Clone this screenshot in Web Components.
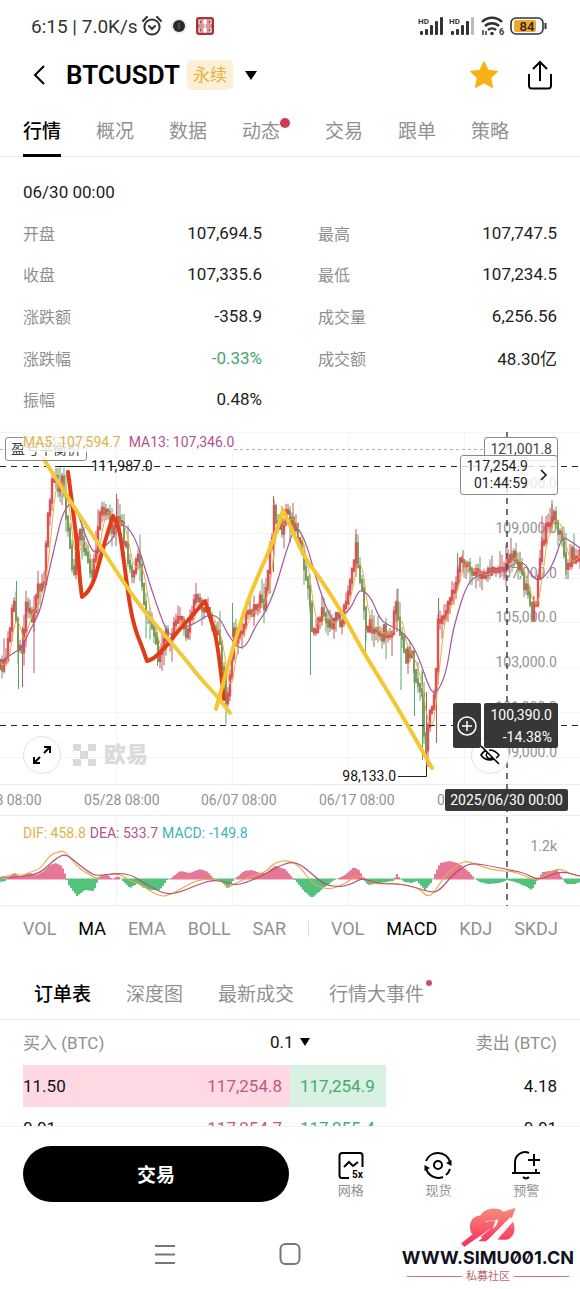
<!DOCTYPE html>
<html lang="zh-CN">
<head>
<meta charset="utf-8">
<meta name="viewport" content="width=device-width, initial-scale=1">
<title>BTCUSDT 永续</title>
<style>
  body {
    margin: 0;
    background: #fff;
    color: #222;
    font-family: Roboto, "Noto Sans CJK SC", sans-serif;
    font-size: 17px;
  }
</style>
</head>
<body>
<market-page></market-page>

<script>
(() => {
  const RESET = `
    *, *::before { box-sizing: border-box; }
    svg { display: block; }
    button, select {
      appearance: none;
      background: none;
      border: 0;
      color: inherit;
      font: inherit;
      margin: 0;
      padding: 0;
    }
  `;

  // Registers an element whose shadow root is cloned from a template
  function define(name, css, html, setup) {
    const template = document.createElement('template');
    template.innerHTML = `<style>${RESET}${css}</style>${html}`;

    customElements.define(name, class extends HTMLElement {
      constructor() {
        super();
        this.attachShadow({ mode: 'open' });
        this.shadowRoot.appendChild(template.content.cloneNode(true));
      }

      connectedCallback() {
        if (setup) setup(this, this.shadowRoot);
      }
    });
  }

  /* ---------- status bar ---------- */

  const signal = last => `
    <svg width="26" height="20" viewBox="0 0 26 20" fill="#333">
      <text x="0" y="8" font-size="8" font-weight="700">HD</text>
      <rect x="2" y="15" width="3" height="4" rx="1"/><rect x="7" y="13" width="3" height="6" rx="1"/>
      <rect x="12" y="9" width="3" height="10" rx="1"/><rect x="17" y="5" width="3" height="14" rx="1"/>
      <rect x="22" y="1" width="3" height="18" rx="1" fill="${last}"/>
    </svg>`;

  define('status-bar', `
    :host {
      align-items: center;
      color: #333;
      display: flex;
      font-size: 19px;
      height: 50px;
      justify-content: space-between;
      padding: 2px 33px 0 31px;
    }
    div { align-items: center; display: flex; gap: 4px; }
    .right { gap: 5px; }
    .dot { margin: 0 5px; }
  `, `
    <div>
      <span>6:15 | 7.0K/s</span>
      <svg width="20" height="20" viewBox="0 0 20 20" fill="none" stroke="#333" stroke-width="2" stroke-linecap="round">
        <circle cx="10" cy="11" r="7.6"/><path d="M1 5l4-4M19 5l-4-4M7 10l3 3 3-3"/>
      </svg>
      <svg class="dot" width="16" height="16" viewBox="0 0 16 16">
        <circle cx="8" cy="8" r="8" fill="#eee"/><circle cx="8" cy="8" r="6" fill="#2b2b2b"/><path d="M8 5v6" stroke="#777"/>
      </svg>
      <svg width="18" height="18" viewBox="0 0 18 18" fill="none" stroke="#fff" stroke-width="1.2">
        <rect width="18" height="18" rx="3" fill="#a93236" stroke="none"/>
        <path d="M3 3h5v4H3zM10 3h5v4h-5zM5 5h8M9 2v14M2.500 9h13M3 15v-4h5v4zM10 15v-4h5v4zM5 13h8"/>
      </svg>
    </div>
    <div class="right">
      ${signal('#333')}${signal('#bbb')}
      <svg width="25" height="22" viewBox="0 -1 25 22" fill="none" stroke="#333" stroke-width="2.500">
        <path d="M2 6a14 14 0 0 1 20 0M5 10a10 10 0 0 1 14 0M8 14a6 6 0 0 1 8 0"/>
        <circle cx="12" cy="17.500" r="1.800" fill="#333" stroke="none"/>
        <path d="M3 19v-5M6 15v4" stroke-width="1.500"/>
        <text x="19" y="19" font-size="9" font-weight="700" fill="#333" stroke="none">6</text>
      </svg>
      <svg width="37" height="18" viewBox="0 0 37 18">
        <rect x="1" y="1" width="32" height="16" rx="5" fill="#fff" stroke="#333" stroke-width="1.600"/>
        <rect x="4" y="3" width="22" height="12" rx="2" fill="#f0a72c"/>
        <path d="M35.500 6v6" stroke="#333" stroke-width="2"/>
        <text x="17" y="14" font-size="13" font-weight="500" text-anchor="middle" fill="#222">84</text>
      </svg>
    </div>
  `);

  /* ---------- pair header ---------- */

  define('pair-header', `
    :host {
      align-items: center;
      color: #000;
      display: flex;
      height: 50px;
      padding: 0 27px 0 32px;
    }
    h1 { font-size: 26px; font-weight: 600; line-height: 32px; margin: 0 7px 0 18px; }
    .pair { align-items: center; display: flex; gap: 12px; }
    .tag {
      background: #fcefd5;
      border-radius: 5px;
      color: #e5b23a;
      font-size: 17px;
      line-height: 28px;
      padding: 1px 6px;
    }
    .share { margin-left: 29px; }
    .star { margin-left: auto; }
  `, `
    <button aria-label="返回">
      <svg width="16" height="20" viewBox="0 0 16 20" fill="none" stroke="#000" stroke-width="2"><path d="M12 1L3 10l9 9"/></svg>
    </button>
    <h1><slot></slot></h1>
    <button class="pair" aria-label="切换合约">
      <span class="tag">永续</span>
      <svg width="12" height="9" viewBox="0 0 12 9"><path d="M0 0h12L6 9z"/></svg>
    </button>
    <button class="star" aria-label="收藏">
      <svg width="28" height="28" viewBox="0 0 28 28" fill="#fbb016" stroke="#fbb016" stroke-width="1.500" stroke-linejoin="round">
        <path d="M14 1l4 8.500 9.200 1-6.800 6.300 1.900 9.400L14 21.600l-8.300 4.600 1.900-9.400L.8 10.500l9.200-1z"/>
      </svg>
    </button>
    <button class="share" aria-label="分享">
      <svg width="26" height="30" viewBox="0 0 26 30" fill="none" stroke="#000" stroke-width="2">
        <path d="M2 14v12a2.500 2.500 0 0 0 2.500 2.500h17A2.500 2.500 0 0 0 24 26V14M13 21V2M6 9l7-7 7 7"/>
      </svg>
    </button>
  `);

  /* ---------- tabs ---------- */

  define('tab-strip', `
    :host {
      border-bottom: 1px solid #ececec;
      display: flex;
      gap: 35px;
      padding: 14px 23px 0;
      white-space: nowrap;
    }
    :host([inset]) { padding: 26px 34px 0; }
  `, '<slot></slot>');

  define('tab-item', `
    :host { color: #919191; display: block; font-size: 19px; line-height: 36px; }
    :host([active]) { color: #000; font-weight: 500; }
    button { display: block; padding-bottom: 6px; position: relative; }
    :host([underline]) button { box-shadow: 0 1px #000, inset 0 -2px #000; }
    :host([badge="large"]) { margin-right: 10px; }
    :host([badge]) button::before {
      background: #cd3c52;
      border-radius: 50%;
      content: "";
      height: 10px;
      position: absolute;
      right: -10px;
      top: 4px;
      width: 10px;
    }
    :host([badge="small"]) button::before {
      background: #c4506e;
      height: 6px;
      right: -8px;
      top: 3px;
      width: 6px;
    }
  `, '<button><slot></slot></button>');

  /* ---------- candle summary ---------- */

  define('stat-item', `
    :host { align-items: center; display: flex; justify-content: space-between; }
    .label { color: #8f8f8f; font-size: 16px; }
    :host([down]) .value { color: #3fa66b; }
  `, '<span class="label"></span><span class="value"><slot></slot></span>', (host, root) => {
    root.querySelector('.label').textContent = host.getAttribute('label');
  });

  define('quote-panel', `
    :host { display: block; padding: 23px 23px 12px; }
    time { display: block; line-height: 24px; margin-bottom: 8px; }
    .grid {
      column-gap: 56px;
      display: grid;
      grid-template-columns: 1fr 1fr;
      grid-template-rows: repeat(5, 1fr);
      min-height: 208px;
    }
  `, `
    <time>06/30 00:00</time>
    <div class="grid">
      <stat-item label="开盘">107,694.5</stat-item>
      <stat-item label="最高">107,747.5</stat-item>
      <stat-item label="收盘">107,335.6</stat-item>
      <stat-item label="最低">107,234.5</stat-item>
      <stat-item label="涨跌额">-358.9</stat-item>
      <stat-item label="成交量">6,256.56</stat-item>
      <stat-item label="涨跌幅" down>-0.33%</stat-item>
      <stat-item label="成交额">48.30亿</stat-item>
      <stat-item label="振幅">0.48%</stat-item>
    </div>
  `);

  /* ---------- chart ---------- */

  // All series are [x, y, x, y, ...] in the chart's own units (580 wide)
  const PRICE = [0,236, 5,228, 8,213, 11,188, 14,174, 17,205, 19,225, 22,215, 26,178, 30,176, 33,190, 36,158,
    42,160, 44,150, 46,108, 49,80, 51,55, 55,40, 58,58, 62,46, 65,78, 70,120, 74,140, 77,105, 81,105, 85,124,
    89,136, 93,142, 97,105, 101,82, 106,79, 110,88, 114,100, 117,78, 121,92, 124,108, 128,128, 133,140, 136,125,
    139,118, 142,152, 146,180, 150,190, 154,205, 158,222, 162,214, 165,200, 170,210, 175,194, 180,182, 186,200,
    190,190, 197,160, 200,170, 206,180, 211,190, 216,196, 220,212, 223,240, 226,268, 229,254, 231,238, 234,200,
    238,208, 243,190, 248,183, 254,175, 260,168, 264,172, 268,134, 272,108, 274,82, 278,90, 282,94, 285,80,
    290,92, 295,92, 300,112, 305,140, 308,158, 311,190, 313,206, 317,192, 321,180, 326,188, 331,196, 336,184,
    342,188, 347,172, 350,152, 353,132, 356,118, 360,142, 363,168, 366,198, 370,192, 375,194, 380,204, 384,200,
    390,204, 396,178, 401,208, 406,224, 410,218, 415,240, 419,248, 422,266, 425,320, 427,304, 430,280, 434,266,
    436,238, 438,192, 441,194, 445,184, 449,174, 453,158, 457,142, 461,128, 465,130, 470,140, 476,140, 482,144,
    488,140, 496,138, 503,138, 508,134, 511,118, 515,128, 520,138, 525,152, 529,168, 533,184, 537,160, 541,112,
    545,100, 549,98, 554,84, 558,96, 563,115, 567,134, 572,124, 580,121];

  const MA13 = [0,230, 15,220, 22,216, 30,198, 40,180, 47,148, 55,113, 62,83, 70,70, 77,78, 85,103, 94,123,
    104,115, 112,108, 120,92, 128,95, 137,110, 147,143, 155,168, 165,196, 172,205, 180,196, 190,194, 200,188,
    210,182, 220,186, 228,203, 238,216, 246,215, 256,193, 265,181, 275,158, 285,123, 296,91, 307,113, 315,143,
    325,173, 333,190, 342,183, 350,178, 358,160, 362,158, 371,165, 380,188, 390,194, 398,197, 408,206, 418,223,
    428,253, 435,264, 446,243, 452,203, 458,180, 465,158, 473,145, 490,140, 505,138, 515,131, 525,131, 530,141,
    537,149, 545,145, 555,128, 562,104, 572,110, 580,116];

  const MACD = [0,-3, 5,-2, 6,0, 14,6, 20,2, 24,4, 30,6, 36,4, 44,8, 50,14, 56,16, 62,13, 66,3, 68,-5, 77,-17,
    85,-11, 94,-12, 98,-1, 100,4, 108,4, 112,0, 118,3, 121,0, 130,-9, 138,-4, 142,-8, 150,-11, 160,-11, 167,-1,
    170,0, 180,8, 190,6, 200,10, 208,7, 214,0, 222,-3, 228,-10, 233,-2, 236,1, 244,8, 252,9, 260,6, 266,6,
    275,13, 285,10, 293,1, 296,-2, 304,-12, 312,-19, 320,-12, 334,-1, 337,0, 345,4, 354,12, 360,8, 364,-1,
    368,-6, 380,-4, 393,-2, 397,5, 400,0, 405,-3, 412,-4, 417,-2, 425,-11, 432,-3, 435,5, 440,16, 450,18,
    460,15, 470,6, 475,0, 480,-3, 488,-5, 500,-4, 507,-1, 515,-3, 525,-7, 532,-11, 538,0, 543,7, 550,8, 557,9,
    562,1, 566,-5, 575,-5, 580,-3];

  const DIF = [0,445, 10,444, 15,441, 22,444, 30,440, 40,437, 50,423, 60,419, 66,420, 77,435, 90,443, 97,447,
    105,442, 120,442, 130,449, 140,452, 150,459, 162,465, 172,462, 184,455, 197,448, 212,447, 222,449, 228,456,
    240,449, 252,444, 266,440, 275,430, 290,428, 300,435, 312,451, 322,456, 332,457, 345,452, 355,444, 362,444,
    370,451, 380,452, 395,451, 405,453, 420,457, 427,465, 434,461, 445,443, 460,431, 468,429, 480,434, 497,439,
    512,439, 525,444, 537,449, 548,441, 560,436, 570,442, 580,444];

  const DEA = [0,446, 22,445, 40,441, 50,432, 58,425, 66,422, 77,431, 90,441, 97,444, 118,441, 132,443, 142,450,
    155,457, 165,462, 178,461, 197,453, 212,448, 225,450, 235,453, 245,451, 262,444, 277,435, 290,430, 300,432,
    312,442, 325,453, 340,455, 352,452, 362,446, 372,450, 385,452, 400,452, 415,455, 432,461, 440,458, 450,446,
    462,435, 473,431, 490,434, 510,438, 525,441, 535,447, 545,446, 560,439, 580,444];

  // Hand-drawn trend strokes
  const STROKES = [
    ['#e23b17', [68,40, 77,108, 80,150, 82,165, 82,165, 88,160, 95,147, 104,112, 113,84, 113,84, 119,95, 123,122, 130,176, 136,200, 141,212, 147,229, 147,229, 153,227, 165,216, 178,199, 190,186, 205,169, 205,169, 211,188, 217,208, 224,267]],
    ['#f3c93c', [43,26, 70,69, 100,114, 126,154, 146,182, 170,209, 190,233, 200,246, 217,264, 230,281]],
    ['#f6c52f', [216,277, 230,226, 245,176, 259,141, 274,108, 283,78, 283,78, 289,91, 304,125, 322,149, 343,182, 362,218, 390,263, 411,299, 432,336]]
  ];

  // Wicks that reach well past their neighbours: x, top, bottom, rising
  const WICKS = [[16.5, 149, 186, 0], [18.5, 200, 257, 0], [22.5, 195, 255, 1], [60, 34, 70, 0], [34, 192, 241, 1],
    [226, 250, 292, 0], [232.5, 171, 205, 0], [273.5, 64, 140, 1], [293, 71, 100, 1], [310.500, 150, 243, 0],
    [365.500, 185, 223, 0], [397, 157, 200, 1], [356, 102, 145, 1], [401, 205, 258, 0], [414.500, 230, 284, 0],
    [422.500, 240, 328, 0], [426.500, 260, 340, 1], [436.500, 250, 311, 1], [438.500, 166, 245, 1],
    [457.500, 121, 150, 0], [463, 118, 140, 1], [511, 106, 130, 1], [552, 68, 100, 0], [542, 84, 112, 1],
    [566, 120, 147, 0], [533.500, 165, 188, 1], [124.500, 120, 150, 0], [157.500, 200, 234, 0], [116.500, 62, 95, 1]];

  function valueAt(series, x) {
    let i = 2;
    while (i < series.length - 2 && series[i] < x) i += 2;
    const t = (x - series[i - 2]) / (series[i] - series[i - 2]);
    return series[i - 1] + (series[i + 1] - series[i - 1]) * t;
  }

  // A repeated point keeps its corner sharp
  function smooth(p) {
    let d = `M${p[0]} ${p[1]}`;
    for (let i = 2; i < p.length - 2; i += 2) {
      d += `Q${p[i]} ${p[i + 1]} ${(p[i] + p[i + 2]) / 2} ${(p[i + 1] + p[i + 3]) / 2}`;
    }
    return `${d}L${p[p.length - 2]} ${p[p.length - 1]}`;
  }

  // Small repeatable generator, so that the candles are the same on every load
  function seeded(seed) {
    return () => {
      seed = (seed * 16807) % 2147483647;
      return seed / 2147483647;
    };
  }

  function drawCandles() {
    const rand = seeded(77);
    const step = 2;
    const paths = { up: '', down: '', upWick: '', downWick: '' };
    const closes = [];
    let open = valueAt(PRICE, 0);

    for (let x = 0; x <= 580; x += step) {
      const calm = x > 468 && x < 508 ? 6 : 14;
      const close = valueAt(PRICE, x) + (rand() - 0.5) * calm;
      const key = close <= open + 3 ? 'up' : 'down';
      const top = Math.min(open, close) - 2;
      const bottom = Math.max(open, close) + 2;
      const high = Math.max(36, top - rand() * rand() * 22);
      const low = bottom + rand() * rand() * 22;

      paths[key] += `M${x} ${top.toFixed(1)}V${bottom.toFixed(1)}`;
      paths[`${key}Wick`] += `M${x} ${high.toFixed(1)}V${low.toFixed(1)}`;
      closes.push(close);
      open = close;
    }

    WICKS.forEach(([x, top, bottom, up]) => {
      paths[up ? 'upWick' : 'downWick'] += `M${x} ${top}V${bottom}`;
    });

    const ma5 = closes.map((c, i) => {
      const part = closes.slice(Math.max(0, i - 4), i + 1);
      return `${i ? 'L' : 'M'}${i * step} ${(part.reduce((a, b) => a + b) / part.length).toFixed(1)}`;
    }).join('');

    return `
      <path d="${paths.downWick}" stroke="#56a869"/>
      <path d="${paths.upWick}" stroke="#bb5a60"/>
      <path d="${paths.down}" stroke="#7f9a5e" stroke-width="2"/>
      <path d="${paths.up}" stroke="#db5257" stroke-width="2.400"/>
      <path d="${ma5}" stroke="#ecae43"/>
      <path d="${smooth(MA13)}" stroke="#aa5797" stroke-width="1.200"/>`;
  }

  function drawMacd() {
    let up = '';
    let down = '';
    for (let x = 1; x < 580; x += 2) {
      const v = valueAt(MACD, x);
      if (v > 0) up += `M${x} 447.500V${(447 - v).toFixed(1)}`;
      else down += `M${x} 446.500V${(447 - v).toFixed(1)}`;
    }
    return `
      <path d="${up}" stroke="#e0557c" stroke-width="1.600"/>
      <path d="${down}" stroke="#33b865" stroke-width="1.700"/>
      <path d="${smooth(DIF)}" stroke="#e9a94b" stroke-width="1.200"/>
      <path d="${smooth(DEA)}" stroke="#b64f72" stroke-width="1.200"/>`;
  }

  function drawAxis() {
    const prices = ['111,000.0', '109,000.0', '107,000.0', '105,000.0', '103,000.0', '101,000.0', '99,000.0'];
    const rows = prices.map((p, i) => `<text x="557" y="${56 + Math.round(i * 44.800)}" text-anchor="end">${p}</text>`);
    const days = [['05/18', -34], ['05/28', 84], ['06/07', 201], ['06/17', 319], ['06/27', 437]]
      .map(([d, x]) => `<text x="${x}" y="373">${d} 08:00</text>`);
    return rows.concat(days).join('');
  }

  define('price-chart', `
    :host { display: block; font-size: 14px; line-height: 20px; position: relative; overflow: hidden; }
    .plot { height: auto; width: 100%; }
    .plot path { fill: none; }
    .legend { display: flex; gap: 8px; left: 23px; position: absolute; top: 0; }
    .legend.price { background: rgba(255, 255, 255, 0.8); }
    .legend.macd { gap: 4px; top: 391px; }
    .ma5 { color: #dfb34b; }
    .ma13 { color: #b4528f; }
    .teal { color: #3bb4be; }
    .tag {
      background: rgba(255, 255, 255, 0.8);
      border: 1px solid #8a8a8a;
      border-radius: 3px;
      color: #444;
      position: absolute;
    }
    .even { left: 5px; padding: 1px 5px; top: 5px; }
    .limit { padding: 1px 5px; right: 22px; top: 5px; }
    .last {
      align-items: center;
      color: #222;
      display: flex;
      gap: 12px;
      line-height: 17px;
      padding: 2px 9px 2px 5px;
      right: 22px;
      text-align: right;
      top: 23px;
    }
    .last span, .cross span { display: block; }
    .round {
      background: #fff;
      border: 1px solid #e2e2e2;
      border-radius: 50%;
      display: grid;
      height: 38px;
      place-items: center;
      position: absolute;
      top: 304px;
      width: 38px;
    }
    .expand { left: 23px; }
    .hide { right: 71px; }
    .cross { color: #fff; display: flex; gap: 3px; position: absolute; right: 22px; top: 271px; }
    .cross > * { background: #373737; border-radius: 2px; }
    .cross button { display: grid; place-items: center; width: 28px; }
    .cross div { line-height: 22px; padding: 1px 6px 0; text-align: right; }
    .date {
      background: #373737;
      border-radius: 2px;
      color: #fff;
      line-height: 22px;
      padding: 0 5px;
      position: absolute;
      right: 12px;
      top: 357px;
    }
    .slash { position: absolute; right: 80px; top: 313px; }
    .brand {
      align-items: center;
      color: #dadada;
      display: flex;
      font-size: 22px;
      font-weight: 900;
      gap: 8px;
      left: 73px;
      line-height: 32px;
      position: absolute;
      top: 307px;
    }
  `, `
    <svg class="plot" viewBox="0 0 580 474" font-size="14" fill="#929292"></svg>
    <span class="tag even">盈亏平衡价</span>
    <div class="legend price"><span class="ma5">MA5: 107,594.7</span><span class="ma13">MA13: 107,346.0</span></div>
    <div class="legend macd"><span class="ma5">DIF: 458.8</span><span class="ma13">DEA: 533.7</span><span class="teal">MACD: -149.8</span></div>
    <span class="tag limit">121,001.8</span>
    <button class="tag last">
      <span><span>117,254.9</span><span>01:44:59</span></span>
      <svg width="8" height="12" viewBox="0 0 8 12" fill="none" stroke="#111" stroke-width="1.500"><path d="M1 1l5 5-5 5"/></svg>
    </button>
    <button class="round expand" aria-label="全屏">
      <svg width="20" height="20" viewBox="0 0 20 20" fill="none" stroke="#000" stroke-width="2">
        <path d="M12 8l6-6M12 2h6v6M8 12l-6 6M2 12v6h6"/>
      </svg>
    </button>
    <div class="brand">
      <svg width="23" height="22" viewBox="0 0 23 22" fill="#dadada">
        <path d="M0 0h8v7H0zM15 0h8v7h-8zM7 7h8v8H7zM0 15h8v7H0zM15 15h8v7h-8z"/>
      </svg>
      <span>欧易</span>
    </div>
    <button class="round hide" aria-label="隐藏"></button>
    <div class="cross">
      <button aria-label="下单">
        <svg width="20" height="20" viewBox="0 0 20 20" fill="none" stroke="#fff" stroke-width="1.500">
          <circle cx="10" cy="10" r="9"/><path d="M10 5v10M5 10h10"/>
        </svg>
      </button>
      <div><span>100,390.0</span><span>-14.38%</span></div>
    </div>
    <svg class="slash" width="20" height="20" viewBox="0 0 20 20" fill="none" stroke="#000" stroke-width="1.600">
      <path d="M1 1l18 18M6 5Q3 7 1 10q3.500 5 9 5 2 0 4-1M9 5q6 0 10 5-1 2-3 3M8 7a3.500 3.500 0 0 0 4 6"/>
    </svg>
    <span class="date">2025/06/30 00:00</span>
  `, (host, root) => {
    root.querySelector('.plot').innerHTML = `
      <path d="M0 .5H580M0 56.500H580M0 101.500H580M0 146.500H580M0 190.500H580M0 235.500H580M0 280.500H580M0 325.500H580
        M116.500 0V352M232.500 0V352M348.500 0V352M464.500 0V352M116.500 384V474M232.500 384V474M348.500 384V474M464.500 384V474" stroke="#f4f4f4"/>
      <path d="M0 352.500H580M0 383.500H580M0 473.500H580" stroke="#ebebeb"/>
      ${drawAxis()}
      <text x="557" y="419" text-anchor="end">1.2k</text>
      <path d="M0 17.500H484" stroke="#b5b5b5" stroke-dasharray="3 3"/>
      ${drawCandles()}
      ${drawMacd()}
      <path d="M0 34.500H580M0 293.500H580" stroke="#222" stroke-dasharray="6 5"/>
      <path d="M507 0V474" stroke="#444" stroke-width="1.500" stroke-dasharray="6 5"/>
      <path d="M60 34.500H90M398 344.500H426.500V334" stroke="#222"/>
      <text x="91" y="39" fill="#111">111,987.0</text>
      <text x="396" y="349" fill="#111" text-anchor="end">98,133.0</text>
      ${STROKES.map(([color, points]) =>
        `<path d="${smooth(points)}" stroke="${color}" stroke-width="4" stroke-linecap="round" stroke-linejoin="round"/>`).join('')}
    `;
  });

  define('indicator-bar', `
    :host {
      align-items: center;
      color: #919191;
      display: flex;
      font-size: 18px;
      height: 45px;
      justify-content: space-between;
      padding: 0 22px 0 23px;
    }
    .on { color: #000; }
    hr { background: #ddd; border: 0; height: 16px; margin: 0; width: 1px; }
  `, `
    <button>VOL</button><button class="on">MA</button><button>EMA</button><button>BOLL</button><button>SAR</button>
    <hr>
    <button>VOL</button><button class="on">MACD</button><button>KDJ</button><button>SKDJ</button>
  `);

  /* ---------- order book ---------- */

  define('order-book', `
    :host { color: #111; display: block; height: 106px; overflow: hidden; padding: 0 23px; }
    table { border-collapse: collapse; table-layout: fixed; width: 100%; }
    th { color: #8f8f8f; font-weight: 400; height: 45px; padding: 0 0 2px; }
    td { height: 42px; padding: 0; }
    th:first-child, td:first-child, .ask { text-align: left; }
    th:last-child, td:last-child, .bid { text-align: right; }
    .bid { color: #c0587e; padding-right: 8px; }
    .ask { color: #43ab6c; padding-left: 10px; }
    .best { background: linear-gradient(90deg, #fed9e4 50%, #d8f1e3 50% 68%, transparent 68%); }
    label { align-items: center; color: #111; display: flex; gap: 6px; justify-content: center; }
  `, `
    <table>
      <thead>
        <tr>
          <th>买入 (BTC)</th>
          <th colspan="2">
            <label>
              <select aria-label="精度"><option>0.1</option></select>
              <svg width="10" height="8" viewBox="0 0 10 8"><path d="M0 0h10L5 8z"/></svg>
            </label>
          </th>
          <th>卖出 (BTC)</th>
        </tr>
      </thead>
      <tbody>
        <tr class="best"><td>11.50</td><td class="bid">117,254.8</td><td class="ask">117,254.9</td><td>4.18</td></tr>
        <tr><td>0.01</td><td class="bid">117,254.7</td><td class="ask">117,255.4</td><td>0.01</td></tr>
      </tbody>
    </table>
  `);

  /* ---------- bottom ---------- */

  define('action-bar', `
    :host {
      border-top: 1px solid #f0f0f0;
      display: flex;
      padding: 19px 10px 0 23px;
    }
    .trade {
      background: #000;
      border-radius: 28px;
      color: #fff;
      flex: 0 0 266px;
      font-size: 19px;
      font-weight: 700;
      height: 56px;
      margin-right: 18px;
      padding-bottom: 2px;
    }
    nav { display: grid; flex: 1; grid-template-columns: repeat(3, 1fr); }
    nav button {
      align-items: center;
      color: #919191;
      display: flex;
      flex-direction: column;
      font-size: 13px;
      gap: 2px;
      line-height: 18px;
      padding-top: 4px;
    }
    nav svg { fill: none; stroke: #000; stroke-width: 2; }
  `, `
    <button class="trade">交易</button>
    <nav>
      <button>
        <svg width="28" height="30" viewBox="0 0 28 30">
          <path d="M12 28H5a2.500 2.500 0 0 1-2.500-2.500v-20A2.500 2.500 0 0 1 5 3h18a2.500 2.500 0 0 1 2.500 2.500V17M7 17l5-5 4 4 5-4"/>
          <text x="15" y="28" font-size="10" font-weight="700" fill="#000" stroke="none">5x</text>
        </svg>
        网格
      </button>
      <button>
        <svg width="30" height="30" viewBox="0 0 30 30">
          <circle cx="15" cy="15" r="4"/>
          <path d="M3 11a12.700 12.700 0 0 1 24 1M27 19a12.700 12.700 0 0 1-4 6M20 27a12.700 12.700 0 0 1-17-9"/>
          <path d="M28.500 10v6l-5.500-3zM1.500 21v-6l5.500 3z" fill="#000" stroke="none"/>
        </svg>
        现货
      </button>
      <button>
        <svg width="30" height="30" viewBox="0 0 30 30">
          <path d="M1 23h28M4 23V12a10 10 0 0 1 14-9M25 19v4M23 4v12M17 10h12M12 27q3 3 6 0"/>
        </svg>
        预警
      </button>
    </nav>
  `);

  define('system-nav', `
    :host {
      display: grid;
      grid-template-columns: repeat(3, 125px);
      justify-content: center;
      justify-items: center;
      padding: 40px 0 23px;
    }
    svg { fill: none; stroke: #777; stroke-width: 2; }
  `, `
    <button aria-label="最近任务"><svg width="22" height="24" viewBox="0 0 22 24"><path d="M1 4h20M1 12.500h20M1 21h20"/></svg></button>
    <button aria-label="主屏幕"><svg width="22" height="24" viewBox="0 0 22 24"><rect x="1.500" y="2" width="19" height="20" rx="5"/></svg></button>
  `);

  define('site-mark', `
    :host {
      align-items: center;
      bottom: 5px;
      color: #101020;
      display: flex;
      flex-direction: column;
      position: absolute;
      right: 6px;
    }
    .name {
      font-family: Inter, Roboto, sans-serif;
      font-feature-settings: "zero";
      font-size: 18px;
      font-weight: 700;
      line-height: 22px;
    }
    .sub { align-items: center; align-self: stretch; color: #c06673; display: flex; font-size: 11px; gap: 4px; line-height: 15px; padding: 0 5px; }
    .sub::before, .sub::after { background: #cf7480; content: ""; flex: 1; height: 1px; }
  `, `
    <svg width="58" height="40" viewBox="0 0 58 42">
      <defs><linearGradient id="g" gradientUnits="userSpaceOnUse" x1="0" y1="2" x2="0" y2="40"><stop offset="0" stop-color="#f58a7b"/><stop offset="1" stop-color="#fb2f5c"/></linearGradient></defs>
      <path d="M12 28C7 19 12 9 21 9 25 1 40-1 45 5L57 1l-4 11C59 19 58 32 49 34H28z" fill="url(#g)"/>
      <path d="M8 42L33 22l3 3 4-12-14 2 3 3L4 36zM17 38l7 1L54 9l3 4-18 25z" fill="#fff" opacity=".95"/>
      <path d="M1 38l25-20-2-2 13-2-4 11-2-2L4 42zM19 36L50 9l-2-3 10-5-4 11-2-2-25 26z" fill="url(#g)"/>
      <path d="M39 34l16-18q3 17-8 18z" fill="url(#g)"/>
    </svg>
    <span class="name">WWW.SIMU001.CN</span>
    <span class="sub">私募社区</span>
  `);

  define('market-page', `
    :host { display: block; }
    footer { position: relative; }
  `, `
    <status-bar></status-bar>
    <pair-header>BTCUSDT</pair-header>
    <tab-strip>
      <tab-item active underline>行情</tab-item>
      <tab-item>概况</tab-item>
      <tab-item>数据</tab-item>
      <tab-item badge="large">动态</tab-item>
      <tab-item>交易</tab-item>
      <tab-item>跟单</tab-item>
      <tab-item>策略</tab-item>
    </tab-strip>
    <quote-panel></quote-panel>
    <price-chart></price-chart>
    <indicator-bar></indicator-bar>
    <tab-strip inset>
      <tab-item active>订单表</tab-item>
      <tab-item>深度图</tab-item>
      <tab-item>最新成交</tab-item>
      <tab-item badge="small">行情大事件</tab-item>
    </tab-strip>
    <order-book></order-book>
    <footer>
      <action-bar></action-bar>
      <system-nav></system-nav>
      <site-mark></site-mark>
    </footer>
  `);
})();
</script>
</body>
</html>
